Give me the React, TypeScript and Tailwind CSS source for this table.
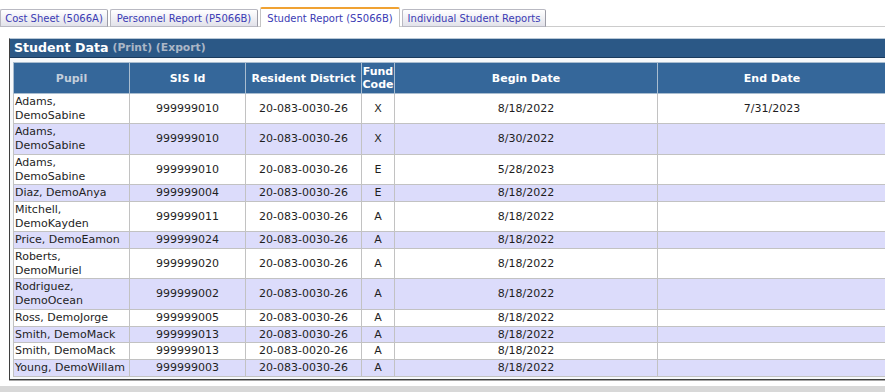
type Row = {
  pupil: string[];
  sis: string;
  district: string;
  fund: string;
  begin: string;
  end: string;
};

const rows: Row[] = [
  { pupil: ["Adams,", "DemoSabine"], sis: "999999010", district: "20-083-0030-26", fund: "X", begin: "8/18/2022", end: "7/31/2023" },
  { pupil: ["Adams,", "DemoSabine"], sis: "999999010", district: "20-083-0030-26", fund: "X", begin: "8/30/2022", end: "" },
  { pupil: ["Adams,", "DemoSabine"], sis: "999999010", district: "20-083-0030-26", fund: "E", begin: "5/28/2023", end: "" },
  { pupil: ["Diaz, DemoAnya"], sis: "999999004", district: "20-083-0030-26", fund: "E", begin: "8/18/2022", end: "" },
  { pupil: ["Mitchell,", "DemoKayden"], sis: "999999011", district: "20-083-0030-26", fund: "A", begin: "8/18/2022", end: "" },
  { pupil: ["Price, DemoEamon"], sis: "999999024", district: "20-083-0030-26", fund: "A", begin: "8/18/2022", end: "" },
  { pupil: ["Roberts,", "DemoMuriel"], sis: "999999020", district: "20-083-0030-26", fund: "A", begin: "8/18/2022", end: "" },
  { pupil: ["Rodriguez,", "DemoOcean"], sis: "999999002", district: "20-083-0030-26", fund: "A", begin: "8/18/2022", end: "" },
  { pupil: ["Ross, DemoJorge"], sis: "999999005", district: "20-083-0030-26", fund: "A", begin: "8/18/2022", end: "" },
  { pupil: ["Smith, DemoMack"], sis: "999999013", district: "20-083-0030-26", fund: "A", begin: "8/18/2022", end: "" },
  { pupil: ["Smith, DemoMack"], sis: "999999013", district: "20-083-0020-26", fund: "A", begin: "8/18/2022", end: "" },
  { pupil: ["Young, DemoWillam"], sis: "999999003", district: "20-083-0030-26", fund: "A", begin: "8/18/2022", end: "" },
];

const tabs = [
  { label: "Cost Sheet (5066A)", w: "w-[108px]" },
  { label: "Personnel Report (P5066B)", w: "w-[148px]" },
  { label: "Student Report (S5066B)", w: "w-[140px]", active: true },
  { label: "Individual Student Reports", w: "w-[144px]" },
];

export default function App() {
  return (
    <div className="w-[885px] h-[392px] overflow-hidden bg-white font-['DejaVu_Sans',Verdana,sans-serif] text-[#1e1e1e]">
      <div className="h-[27px] w-[885px] flex items-end gap-[2px] border-b border-[#cccccc]">
        {tabs.map((t) =>
          t.active ? (
            <div
              key={t.label}
              className={`${t.w} h-[20px] -mb-px flex items-center justify-center border border-b-0 border-[#c4c4c4] border-t-2 border-t-[#f0a232] bg-white text-[10px] text-[#3b3bb4] rounded-t-[2px]`}
            >
              {t.label}
            </div>
          ) : (
            <div
              key={t.label}
              className={`${t.w} h-[18px] -mb-px flex items-center justify-center border border-[#b9b9c2] border-r-[#9c9ca6] bg-gradient-to-b from-white to-[#e2e2ea] text-[10px] text-[#3b3bb4] rounded-t-[2px]`}
            >
              {t.label}
            </div>
          )
        )}
      </div>

      <div className="mt-[11px] ml-[9px] w-[900px] border-l border-b border-[#3f3f3f] border-t border-t-[#b8c8d6] shadow-[0_1px_0_#a8a8a8]">
        <div className="h-[19px] bg-[#2b5886] border-b border-[#1b3b5d] pl-[4px] flex items-center font-bold leading-none">
          <span className="text-white text-[12.6px]">Student Data</span>
          <span className="ml-[4px] text-[#aab6c6] text-[10.8px]">(Print) (Export)</span>
        </div>
        <div className="pl-[3px] pt-[4px] pb-[2px] bg-[#f7f9fb]">
          <table className="border-collapse table-fixed w-[873px] text-[11px] border border-[#b4c0cc]">
            <colgroup>
              <col className="w-[116px]" />
              <col className="w-[116px]" />
              <col className="w-[116px]" />
              <col className="w-[33px]" />
              <col className="w-[263px]" />
              <col className="w-[229px]" />
            </colgroup>
            <thead>
              <tr className="h-[31px] bg-[#35679a] font-bold leading-[13px]">
                <th className="border border-[#a9bdd0] text-[#c3cedb] text-center">Pupil</th>
                <th className="border border-[#a9bdd0] text-white text-center">SIS Id</th>
                <th className="border border-[#a9bdd0] text-white text-center">Resident District</th>
                <th className="border border-[#a9bdd0] text-white text-center px-0">
                  Fund
                  <br />
                  Code
                </th>
                <th className="border border-[#a9bdd0] text-white text-center">Begin Date</th>
                <th className="border border-[#a9bdd0] text-white text-center">End Date</th>
              </tr>
            </thead>
            <tbody className="leading-[13.7px]">
              {rows.map((r, i) => (
                <tr key={i} className={i % 2 === 1 ? "bg-[#dcdcfb]" : "bg-white"}>
                  <td className="border border-[#c2c2c2] py-px pl-px text-left align-middle">
                    {r.pupil.map((p, j) => (
                      <div key={j}>{p}</div>
                    ))}
                  </td>
                  <td className="border border-[#c2c2c2] py-px text-center">{r.sis}</td>
                  <td className="border border-[#c2c2c2] py-px text-center">{r.district}</td>
                  <td className="border border-[#c2c2c2] py-px text-center">{r.fund}</td>
                  <td className="border border-[#c2c2c2] py-px text-center">{r.begin}</td>
                  <td className="border border-[#c2c2c2] py-px text-center">{r.end}</td>
                </tr>
              ))}
            </tbody>
          </table>
        </div>
      </div>

      <div className="mt-[6px] h-[8px] w-[885px] bg-[#d8d8d8]" />
    </div>
  );
}
